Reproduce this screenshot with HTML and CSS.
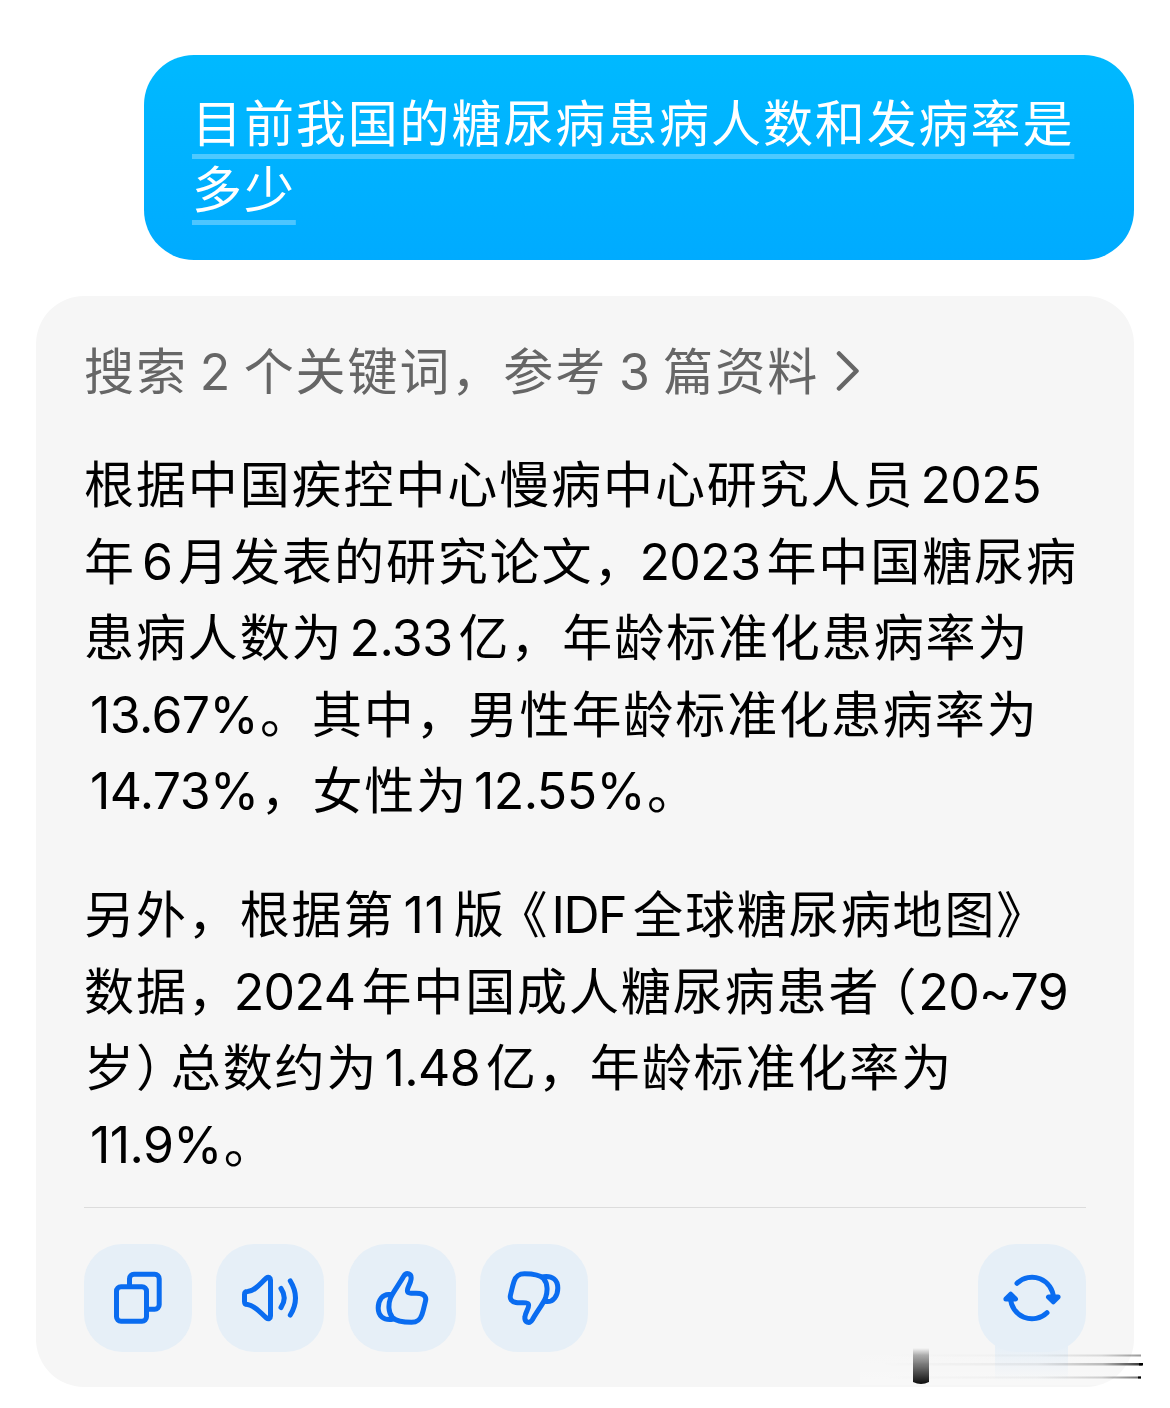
FILE: index.html
```html
<!doctype html>
<html lang="zh-CN">
<head>
	<meta charset="UTF-8">
	<title>糖尿病患病人数</title>
	<link rel="stylesheet" href="styles.css">
</head>
<body>
	<div class="chat">
		<div class="question">
			<span class="underlined">目前我国的糖尿病患病人数和发病率是<br>多少</span>
		</div>
		<div class="answer">
			<div class="sources">
				<span>搜索<b class="mid">2</b>个关键词<i class="comma">，</i>参考<b class="mid">3</b>篇资料</span>
				<svg class="arrow" width="24" height="42" viewBox="0 0 24 42"><path d="M3 3.500L20.500 21L3 38.500"/></svg>
			</div>
			<p>
				<span class="line">根据中国疾控中心慢病中心研究人员<b>2025</b></span>
				<span class="line">年<b>6</b>月发表的研究论文<i class="comma tight">，</i><b class="flush">2023</b>年中国糖尿病</span>
				<span class="line">患病人数为<b>2.33</b>亿<i class="comma">，</i>年龄标准化患病率为</span>
				<span class="line"><b class="end">13.67%</b>。其中<i class="comma">，</i>男性年龄标准化患病率为</span>
				<span class="line"><b class="end">14.73%</b><i class="comma">，</i>女性为<b class="end">12.55%</b>。</span>
			</p>
			<p>
				<span class="line">另外<i class="comma">，</i>根据第<b class="wide">11</b>版<i class="title">《</i><b class="idf">IDF</b>全球糖尿病地图》</span>
				<span class="line">数据<i class="comma tight">，</i><b class="flush">2024</b>年中国成人糖尿病患者<i class="open">（</i><b class="flush">20~79</b></span>
				<span class="line">岁<i class="close">）</i>总数约为<b>1.48</b>亿<i class="comma">，</i>年龄标准化率为</span>
				<span class="line"><b class="end">11.9%</b>。</span>
			</p>
			<div class="toolbar">
				<div class="btn">
					<svg viewBox="0 0 108 108">
						<rect x="32.500" y="42.800" width="30" height="34.400" rx="4.500"/>
						<path d="M45.500 42V34.700a4.500 4.500 0 0 1 4.500-4.500h20.700a4.500 4.500 0 0 1 4.500 4.500v26a4.500 4.500 0 0 1-4.500 4.500H63"/>
					</svg>
				</div>
				<div class="btn">
					<svg viewBox="0 0 108 108">
						<path d="M28.500 50.500q0-3 3-3C40 46.500 44 39.500 50.500 34c2-1.700 4-.5 4 2v36c0 2.500-2 3.700-4 2C44 68.500 40 62 31.500 60.500q-3 0-3-3z"/>
						<path d="M65 44.500Q71.500 54 65 63.500M74.300 37Q84.700 54 74.300 71"/>
					</svg>
				</div>
				<div class="btn">
					<svg viewBox="0 0 108 108">
						<path d="M42.500 54C45 48 51 40.500 55.500 32.500C58.500 27.500 64 29.500 63 35.500C62.500 40 58.500 44.500 59.500 47.500C60.500 50.500 68 48.500 72 49.500C76.500 50.500 78.500 53 77.500 57C76.500 61 75.500 66 74 70.500C72 76.500 69 78.300 63.500 78.300C56 78.300 48.500 77.500 44.500 73.500C40 68.500 40.300 60 42.500 54z"/>
						<path d="M42 50.500C34.500 49.500 30.200 56.500 30.200 64C30.200 72 35.500 76.500 44.500 75.300"/>
					</svg>
				</div>
				<div class="btn">
					<svg class="down" viewBox="0 0 108 108">
						<path d="M42.500 54C45 48 51 40.500 55.500 32.500C58.500 27.500 64 29.500 63 35.500C62.500 40 58.500 44.500 59.500 47.500C60.500 50.500 68 48.500 72 49.500C76.500 50.500 78.500 53 77.500 57C76.500 61 75.500 66 74 70.500C72 76.500 69 78.300 63.500 78.300C56 78.300 48.500 77.500 44.500 73.500C40 68.500 40.300 60 42.500 54z"/>
						<path d="M42 50.500C34.500 49.500 30.200 56.500 30.200 64C30.200 72 35.500 76.500 44.500 75.300"/>
					</svg>
				</div>
				<div class="btn refresh">
					<svg viewBox="0 0 108 108">
						<path d="M39 39.300A21.500 21.500 0 0 1 75.500 54M69 68.700A21.500 21.500 0 0 1 32.500 54"/>
						<path class="solid" d="M70.500 53h9.600l-4.800 4.800zM37.500 55h-9.600l4.800-4.800z"/>
					</svg>
				</div>
			</div>
		</div>
		<!-- streaks in the corner -->
		<svg class="smear" width="320" height="44" viewBox="0 0 320 44">
			<defs>
				<linearGradient id="bar" x2="0" y2="1">
					<stop offset="0" stop-color="#000" stop-opacity="0"/>
					<stop offset=".2" stop-color="#000" stop-opacity=".3"/>
					<stop offset="1" stop-color="#000" stop-opacity=".95"/>
				</linearGradient>
				<linearGradient id="blue" x2="0" y2="1">
					<stop offset="0" stop-color="#e6eff7"/>
					<stop offset="1" stop-color="#e6eff7" stop-opacity="0"/>
				</linearGradient>
				<linearGradient id="streak">
					<stop offset="0" stop-color="#000" stop-opacity="0"/>
					<stop offset=".6" stop-color="#000" stop-opacity=".06"/>
					<stop offset=".85" stop-color="#000" stop-opacity=".25"/>
					<stop offset="1" stop-color="#000" stop-opacity=".8"/>
				</linearGradient>
				<linearGradient id="fade" x2="0" y2="1">
					<stop offset="0" stop-color="#fff" stop-opacity="0"/>
					<stop offset="1" stop-color="#fff" stop-opacity=".25"/>
				</linearGradient>
			</defs>
			<rect x="20" y="6" width="270" height="38" fill="url(#fade)"/>
			<rect x="155" y="4" width="73" height="36" fill="url(#blue)"/>
			<path d="M73 7h16v34q-8 4-16 0z" fill="url(#bar)"/>
			<rect x="40" y="13.500" width="261" height="2" fill="url(#streak)" opacity=".5"/>
			<rect x="40" y="22" width="262" height="2.500" fill="url(#streak)"/>
			<rect x="40" y="35.500" width="261" height="2" fill="url(#streak)" opacity=".7"/>
			<path d="M299 22h4v2.500h-4zM298 35.500h3v2h-3z"/>
		</svg>
	</div>
</body>
</html>
```
FILE: styles.css
```css
*{
	padding: 0;
	margin: 0;
	box-sizing: border-box;
}
body{
	background-color: #fff;
	font-family: "Noto Sans CJK SC", sans-serif;
	font-size: 50px;
	letter-spacing: 1.9px;
	color: #000;
}
div.chat{
	position: relative;
	width: 1170px;
	height: 1408px;
	padding: 55px 36px 0;
	overflow: hidden;
}
/*---------------------question------------------------------------------------*/
div.question{
	width: 990px;
	height: 205px;
	margin-left: auto;
	padding: 32px 48px 0;
	border-radius: 50px;
	background: linear-gradient(#00b9ff, #00abff);
	color: #fff;
	line-height: 66px;
	white-space: nowrap;
}
span.underlined{
	text-decoration: underline;
	text-decoration-color: rgba(255,255,255,.3);
	text-decoration-thickness: 5px;
	text-decoration-skip-ink: none;
	text-underline-offset: 12px;
}
/*---------------------answer------------------------------------------------*/
div.answer{
	height: 1091px;
	margin-top: 36px;
	padding: 34px 48px 0;
	border-radius: 48px;
	background-color: #f6f6f6;
}
div.sources{
	display: flex;
	align-items: center;
	height: 76px;
	margin-bottom: 37px;
	color: #666;
	white-space: nowrap;
}
svg.arrow{
	margin-top: 6px;
	margin-left: 17px;
	fill: none;
	stroke: #666;
	stroke-width: 4.5;
	stroke-linecap: round;
	stroke-linejoin: round;
}
div.answer p{
	margin-bottom: 47px;
}
span.line{
	display: block;
	height: 76.6px;
	line-height: 76.6px;
	white-space: nowrap;
}
/* latin digits inside chinese text */
b{
	margin: 0 6px;
	font-family: Inter, sans-serif;
	font-weight: 400;
	letter-spacing: -.6px;
}
b.wide{
	margin: 0 8px;
	letter-spacing: .8px;
}
b.mid{
	margin: 0 14px 0 12px;
}
b.flush{
	margin-left: 0;
}
b.end{
	margin-right: 2px;
}
b.idf{
	margin: 0 7px 0 2px;
	letter-spacing: -1.5px;
}
i{
	font-style: normal;
}
/* half width punctuation, spaced by hand */
i.comma,
i.title,
i.open,
i.close{
	font-feature-settings: "halt";
}
i.comma{
	margin-right: 25px;
}
i.tight{
	margin-right: 19px;
}
i.title{
	margin-left: 17px;
}
i.open{
	margin-left: 11px;
}
i.close{
	margin-right: 8px;
}
/*---------------------toolbar------------------------------------------------*/
div.toolbar{
	display: flex;
	gap: 24px;
	margin-top: -19px;
	padding-top: 36px;
	border-top: 1px solid #dcdcdc;
}
div.btn{
	width: 108px;
	height: 108px;
	border-radius: 38px;
	background-color: #e6eff7;
}
div.btn svg{
	display: block;
	fill: none;
	stroke: #0a6cf0;
	stroke-width: 5;
	stroke-linecap: round;
	stroke-linejoin: round;
}
div.btn svg.down{
	transform: rotate(180deg);
}
div.btn .solid{
	fill: #0a6cf0;
}
div.refresh{
	margin-left: auto;
}
svg.smear{
	position: absolute;
	left: 840px;
	top: 1341px;
}
```
